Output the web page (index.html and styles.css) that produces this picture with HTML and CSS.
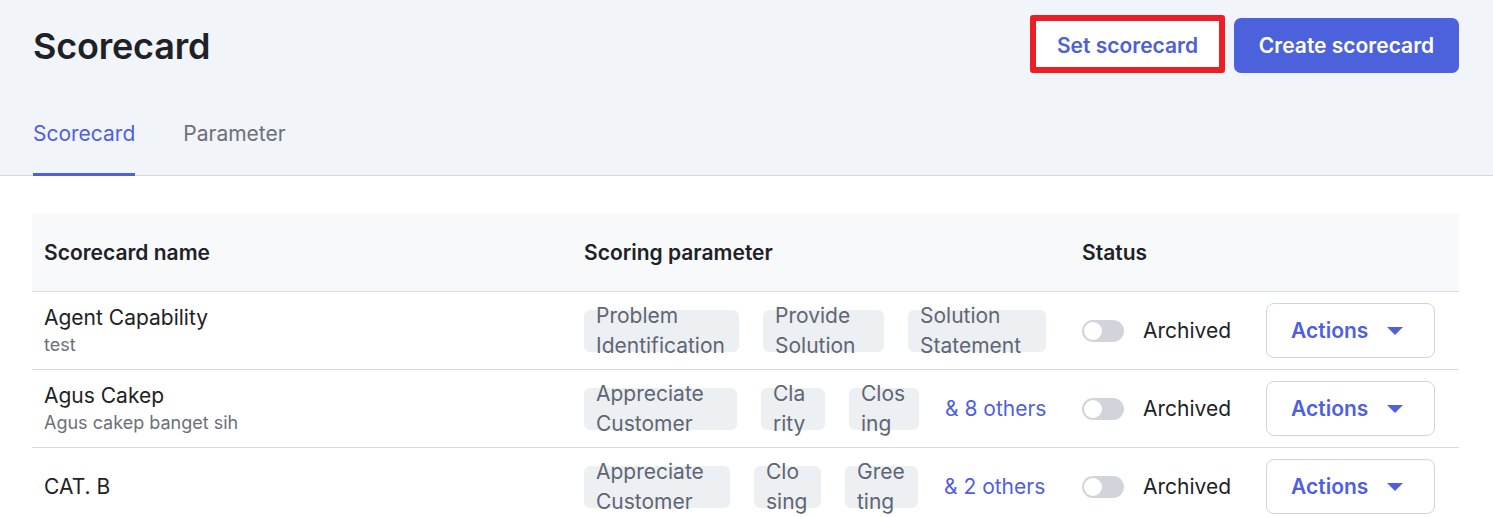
FILE: index.html
```html
<!DOCTYPE html>
<html>
<head>
<meta charset="utf-8">
<link rel="stylesheet" href="styles.css">
</head>
<body>
<header class="top">
  <div class="titlebar">
    <h1 class="title">Scorecard</h1>
    <div class="btns">
      <button class="btn btn-set">Set scorecard</button>
      <button class="btn btn-create">Create scorecard</button>
    </div>
  </div>
  <nav class="tabs">
    <span class="tab active">Scorecard</span>
    <span class="tab">Parameter</span>
  </nav>
</header>
<main class="content">
  <div class="table">
    <div class="row head">
      <div class="cell">Scorecard name</div>
      <div class="cell">Scoring parameter</div>
      <div class="cell">Status</div>
    </div>
    <div class="row">
      <div class="cell name">
        <div class="n-title">Agent Capability</div>
        <div class="n-sub">test</div>
      </div>
      <div class="cell params">
        <span class="chip" style="width:155px">Problem Identification</span>
        <span class="chip" style="width:121px">Provide Solution</span>
        <span class="chip" style="width:138px">Solution Statement</span>
      </div>
      <div class="cell status">
        <span class="toggle"><span class="knob"></span></span>
        <span class="archived">Archived</span>
        <button class="actions">Actions <span class="caret"></span></button>
      </div>
    </div>
    <div class="row">
      <div class="cell name">
        <div class="n-title">Agus Cakep</div>
        <div class="n-sub">Agus cakep banget sih</div>
      </div>
      <div class="cell params">
        <span class="chip" style="width:153px">Appreciate Customer</span>
        <span class="chip" style="width:64px">Clarity</span>
        <span class="chip" style="width:70px">Closing</span>
        <span class="others">&amp; 8 others</span>
      </div>
      <div class="cell status">
        <span class="toggle"><span class="knob"></span></span>
        <span class="archived">Archived</span>
        <button class="actions">Actions <span class="caret"></span></button>
      </div>
    </div>
    <div class="row">
      <div class="cell name">
        <div class="n-title">CAT. B</div>
      </div>
      <div class="cell params">
        <span class="chip" style="width:146px">Appreciate Customer</span>
        <span class="chip" style="width:67px">Closing</span>
        <span class="chip" style="width:73px">Greeting</span>
        <span class="others">&amp; 2 others</span>
      </div>
      <div class="cell status">
        <span class="toggle"><span class="knob"></span></span>
        <span class="archived">Archived</span>
        <button class="actions">Actions <span class="caret"></span></button>
      </div>
    </div>
  </div>
</main>
</body>
</html>
```
FILE: styles.css
```css
* { box-sizing: border-box; }
html, body { margin: 0; padding: 0; }
body {
  font-family: Inter, "Noto Sans", "Liberation Sans", sans-serif;
  color: #1f2328;
  background: #fff;
}
.top {
  background: #f1f4f9;
  border-bottom: 1px solid #d6dae1;
  padding: 15px 34px 0 33px;
}
.titlebar {
  display: flex;
  justify-content: space-between;
  align-items: center;
  height: 58px;
}
.title {
  margin: 0;
  padding-top: 3px;
  font-size: 36px;
  font-weight: 600;
  letter-spacing: -0.2px;
  color: #1e2227;
}
.btns {
  display: flex;
  align-items: flex-end;
  gap: 9px;
  height: 58px;
}
.btn {
  font-family: inherit;
  font-size: 21px;
  font-weight: 600;
  cursor: pointer;
}
.btn-set {
  width: 195px;
  height: 58px;
  background: #fff;
  color: #4f5fd8;
  border: 6px solid #ee1c25;
  border-radius: 3px;
  padding: 2px 0 0 0;
}
.btn-create {
  width: 225px;
  height: 55px;
  background: #4c62dd;
  color: #fff;
  border: none;
  border-radius: 7px;
}
.tabs {
  display: flex;
  gap: 48px;
  margin-top: 49px;
}
.tab {
  font-size: 21px;
  line-height: 24px;
  padding-bottom: 27px;
  border-bottom: 3px solid transparent;
  color: #6b7079;
  margin-bottom: -1px;
}
.tab.active {
  color: #4f5fdf;
  border-bottom-color: #4f5fdf;
}
.content {
  padding: 38px 34px 0 32px;
}
.row {
  display: grid;
  grid-template-columns: 540px 498px 1fr;
  height: 78px;
  border-bottom: 1px solid #d6dae1;
  align-items: center;
}
.row.head {
  background: #f8f9fb;
  font-size: 21px;
  font-weight: 600;
  color: #1e2227;
  height: 78px;
}
.cell {
  padding: 0 12px;
}
.n-title {
  font-size: 21px;
  line-height: 28px;
  color: #1e2227;
}
.n-sub {
  font-size: 18px;
  line-height: 25px;
  color: #6b7079;
}
.params {
  display: flex;
  align-items: center;
  gap: 24px;
}
.chip {
  flex: none;
  height: 42px;
  display: flex;
  align-items: center;
  padding: 0 12px;
  background: #edf0f3;
  border-radius: 6px;
  font-size: 21px;
  line-height: 30px;
  color: #5f6673;
  overflow-wrap: anywhere;
  overflow: visible;
}
.others {
  font-size: 21px;
  color: #4f5fdf;
  margin-left: 2px;
  white-space: nowrap;
}
.status {
  display: flex;
  align-items: center;
}
.toggle {
  width: 42px;
  height: 22px;
  border-radius: 11px;
  background: #d1d5db;
  display: flex;
  align-items: center;
  padding: 0 2px;
  flex: none;
}
.knob {
  width: 18px;
  height: 18px;
  border-radius: 50%;
  background: #fff;
}
.archived {
  margin-left: 19px;
  font-size: 21px;
  color: #1e2227;
}
.actions {
  margin-left: 35px;
  width: 169px;
  height: 55px;
  background: #fff;
  border: 1px solid #d1d5db;
  border-radius: 8px;
  font-family: inherit;
  font-size: 21px;
  font-weight: 600;
  color: #4f5fdf;
  display: flex;
  align-items: center;
  padding: 0 0 0 24px;
  cursor: pointer;
}
.caret {
  margin-left: 19px;
  width: 0;
  height: 0;
  border-left: 8px solid transparent;
  border-right: 8px solid transparent;
  border-top: 8px solid #4f5fdf;
}
```
